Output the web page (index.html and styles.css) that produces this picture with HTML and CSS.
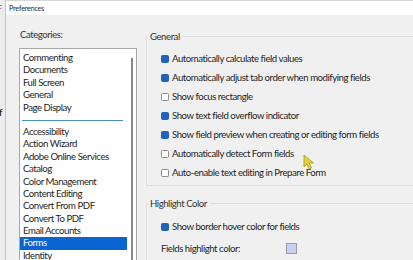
FILE: index.html
```html
<!DOCTYPE html>
<html>
<head>
  <meta charset="utf-8">
  <link rel="stylesheet" href="styles.css">
  <title>Preferences</title>
</head>
<body>
<div class="behind"><span class="behind-f">F</span><span class="behind-of">of</span></div>
<div class="dialog">
  <div class="titlebar">Preferences</div>
  <div class="content">
    <div class="categories">
      <div class="cat-label">Categories:</div>
      <div class="listbox">
        <div class="items">
          <div class="item">Commenting</div>
          <div class="item">Documents</div>
          <div class="item">Full Screen</div>
          <div class="item">General</div>
          <div class="item">Page Display</div>
          <div class="sep"></div>
          <div class="item">Accessibility</div>
          <div class="item">Action Wizard</div>
          <div class="item">Adobe Online Services</div>
          <div class="item">Catalog</div>
          <div class="item">Color Management</div>
          <div class="item">Content Editing</div>
          <div class="item">Convert From PDF</div>
          <div class="item">Convert To PDF</div>
          <div class="item">Email Accounts</div>
          <div class="item selected">Forms</div>
          <div class="item">Identity</div>
        </div>
        <div class="scroll"><div class="thumb"></div></div>
      </div>
    </div>
    <div class="settings">
      <fieldset class="group general">
        <legend>General</legend>
        <div class="row"><span class="box on"></span>Automatically calculate field values</div>
        <div class="row"><span class="box on"></span>Automatically adjust tab order when modifying fields</div>
        <div class="row"><span class="box"></span>Show focus rectangle</div>
        <div class="row"><span class="box on"></span>Show text field overflow indicator</div>
        <div class="row"><span class="box on"></span>Show field preview when creating or editing form fields</div>
        <div class="row"><span class="box"></span>Automatically detect Form fields</div>
        <div class="row"><span class="box"></span>Auto-enable text editing in Prepare Form</div>
      </fieldset>
      <fieldset class="group highlight">
        <legend>Highlight Color</legend>
        <div class="row"><span class="box on"></span>Show border hover color for fields</div>
        <div class="row color-row">Fields highlight color:<span class="swatch"></span></div>
      </fieldset>
    </div>
  </div>
</div>
<svg class="cursor" width="12" height="16" viewBox="0 0 12 16">
  <path d="M1 1 L1 13 L4 10 L6.5 15 L8.5 14 L6 9 L10.5 9 Z" fill="#e6d23a" stroke="#a89a20" stroke-width="0.8"/>
</svg>
</body>
</html>
```

FILE: styles.css
```css
html, body {
  margin: 0;
  padding: 0;
  width: 413px;
  height: 260px;
  overflow: hidden;
}

body {
  position: relative;
  display: flex;
  background: #f3f3f3;
  font-family: "Lato", "Liberation Sans", sans-serif;
  font-size: 9.6px;
  letter-spacing: -0.45px;
  color: #1e1e1e;
}

.behind {
  width: 5px;
  flex: none;
  background: #ececec;
  position: relative;
  overflow: hidden;
  font-size: 9px;
  font-weight: bold;
  letter-spacing: 0;
}

.behind-f {
  position: absolute;
  left: -3px;
  top: 3px;
  color: #777;
  font-weight: normal;
}

.behind-of {
  position: absolute;
  left: -6px;
  top: 107px;
  color: #222;
}

.dialog {
  flex: 1;
  display: flex;
  flex-direction: column;
  border-left: 1px solid #c4c4c4;
  background: #f0f0f0;
}

.titlebar {
  height: 16px;
  border-top: 1px solid #d8d8d8;
  background: #ffffff;
  font-size: 7px;
  letter-spacing: -0.1px;
  line-height: 14px;
  padding-left: 3px;
  color: #222;
}

.content {
  display: flex;
  padding-left: 13px;
}

.categories {
  width: 118px;
  flex: none;
  padding-top: 13px;
}

.cat-label {
  line-height: 14px;
  padding-left: 1px;
  margin-bottom: 6px;
  color: #333;
}

.listbox {
  display: flex;
  height: 240px;
  background: #ffffff;
  border: 1px solid #a8a8a8;
}

.items {
  flex: 1;
  padding-top: 3px;
}

.item {
  height: 12.4px;
  line-height: 12.4px;
  padding-left: 3px;
  white-space: nowrap;
}

.item.selected {
  background: #0a64d2;
  color: #ffffff;
}

.sep {
  height: 1px;
  margin: 6px 4px 5px 2px;
  background: #4a90b8;
}

.scroll {
  width: 9px;
  flex: none;
  display: flex;
  justify-content: center;
  padding-top: 9px;
}

.thumb {
  width: 2px;
  height: 260px;
  background: #8a8a8a;
}

.settings {
  flex: 1;
  padding-left: 9px;
  padding-top: 16px;
}

.group {
  margin: 0;
  width: 300px;
  border: 1px solid #dedede;
  border-right: none;
  padding: 7px 0 6px 0;
}

.group legend {
  padding: 0 3px;
  margin-left: 0;
  color: #333;
}

.general {
  height: 140px;
}

.highlight {
  margin-top: 12px;
  padding-top: 8px;
}

.row {
  display: flex;
  align-items: center;
  height: 19px;
  padding-left: 14px;
  white-space: nowrap;
}

.box {
  width: 6px;
  height: 6px;
  margin-right: 3px;
  border: 1px solid #8a8a8a;
  border-radius: 1.5px;
  background: #ffffff;
  flex: none;
}

.box.on {
  border-color: #2262bd;
  background: #2262bd;
}

.color-row {
  height: 24px;
}

.swatch {
  width: 9px;
  height: 9px;
  margin-left: 46px;
  border: 1px solid #9a9aa8;
  background: #c9d1f2;
}

.cursor {
  position: absolute;
  left: 303px;
  top: 154px;
}
```
